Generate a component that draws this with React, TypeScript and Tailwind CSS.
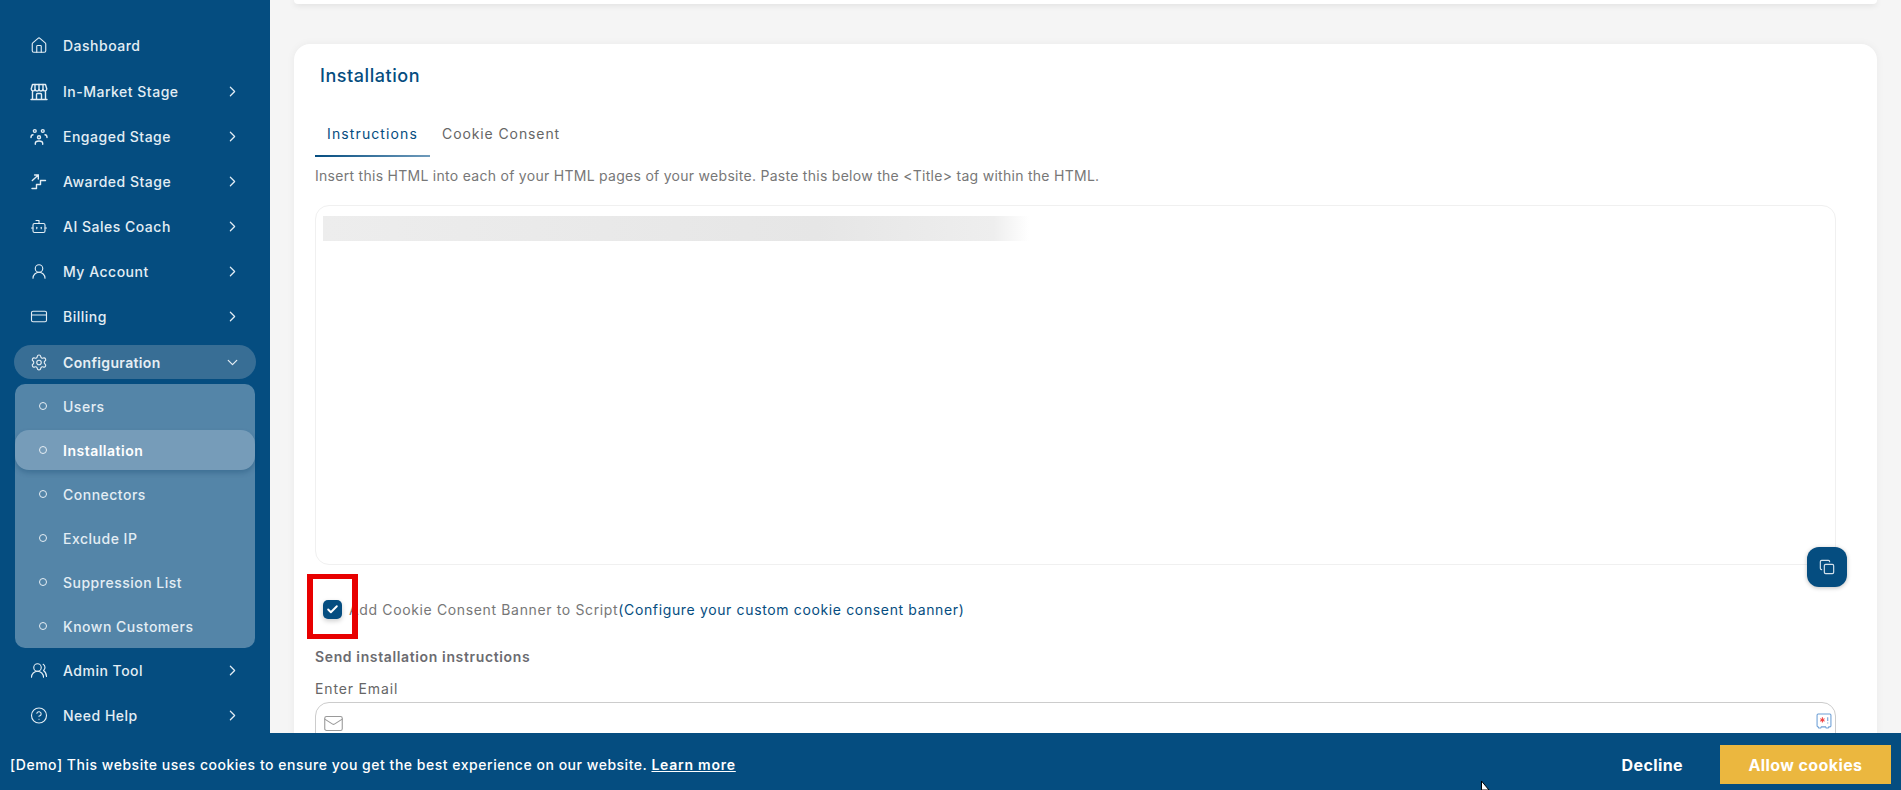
import { House, Bot, UserRound, CreditCard, Settings, UsersRound, CircleHelp, ChevronRight, ChevronDown, Copy, Mail, Check } from "lucide-react";

const font = { fontFamily: '"Inter", "Liberation Sans", sans-serif' };

function Storefront() {
  return (
    <svg width="18" height="18" viewBox="0 0 18 18" fill="none" stroke="currentColor" strokeWidth="1.4" strokeLinecap="round" strokeLinejoin="round">
      <path d="M2.5 1.5h13L16.8 6a2 2 0 0 1-3.9.5 2 2 0 0 1-3.9 0 2 2 0 0 1-3.9 0A2 2 0 0 1 1.2 6Z" />
      <path d="M5 1.5 5 6.5M9 1.5v5M13 1.5v5" />
      <path d="M2.5 8.5v7.5M15.5 8.5v7.5M1 16.5h16M6.5 16v-4.5a1 1 0 0 1 1-1h3a1 1 0 0 1 1 1V16" />
    </svg>
  );
}

function Engaged() {
  return (
    <svg width="18" height="18" viewBox="0 0 18 18" fill="none" stroke="currentColor" strokeWidth="1.4" strokeLinecap="round">
      <circle cx="4.8" cy="3" r="1.4" />
      <circle cx="12.8" cy="3" r="1.4" />
      <circle cx="9" cy="9.3" r="1.5" />
      <path d="M1 9.5c0-1.6 .8-2.5 2-2.7M17 9.5c0-1.6-.8-2.5-2-2.7M5.3 16.2v-.8c0-1.5 1.4-2.4 3.7-2.4s3.7.9 3.7 2.4v.8" />
    </svg>
  );
}

function Stairs() {
  return (
    <svg width="18" height="18" viewBox="0 0 18 18" fill="none" stroke="currentColor" strokeWidth="1.4" strokeLinecap="round" strokeLinejoin="round">
      <path d="M2 15.5h4.5v-4h4v-4h5" />
      <path d="M2.3 7.5 8.3 2M4.6 2h3.7v4" />
    </svg>
  );
}

function KeyBadge() {
  return (
    <svg width="16" height="16" viewBox="0 0 15 15" fill="none">
      <path d="M2 1h11a1 1 0 0 1 1 1v10a1 1 0 0 1-1 1h-1l-.5 1h-2l-.5-1H5l-.5 1h-2L2 13a1 1 0 0 1-1-1V2a1 1 0 0 1 1-1Z" stroke="#6d9fd6" strokeWidth="1" />
      <path d="M6 4v5M4 5.3l4 2.4M8 5.3 4 7.7" stroke="#ef4444" strokeWidth="1" />
      <path d="M11 4v3.5M11 9v.8" stroke="#6d9fd6" strokeWidth="1" />
    </svg>
  );
}

const top = [
  { label: "Dashboard", icon: <House size={19} strokeWidth={1.5} />, chevron: false, h: "h-[47px]" },
  { label: "In-Market Stage", icon: <Storefront />, chevron: true, h: "h-[45px]" },
  { label: "Engaged Stage", icon: <Engaged />, chevron: true, h: "h-[45px]" },
  { label: "Awarded Stage", icon: <Stairs />, chevron: true, h: "h-[45px]" },
  { label: "AI Sales Coach", icon: <Bot size={19} strokeWidth={1.5} />, chevron: true, h: "h-[45px]" },
  { label: "My Account", icon: <UserRound size={19} strokeWidth={1.5} />, chevron: true, h: "h-[45px]" },
  { label: "Billing", icon: <CreditCard size={19} strokeWidth={1.5} />, chevron: true, h: "h-[45px]" },
];

const sub = ["Users", "Installation", "Connectors", "Exclude IP", "Suppression List", "Known Customers"];

function NavRow({ label, icon, chevron, h }: { label: string; icon: React.ReactNode; chevron: boolean; h: string }) {
  return (
    <div className={`${h} flex items-center pl-[30px] pr-[29px] text-[#e3edf4]`}>
      <span className="flex w-[18px] shrink-0 justify-center">{icon}</span>
      <span className="ml-[15px] flex-1 text-[14px] font-medium tracking-[0.5px]">{label}</span>
      {chevron && <ChevronRight size={17} strokeWidth={1.75} />}
    </div>
  );
}

export default function App() {
  return (
    <div className="relative flex h-[790px] w-full overflow-hidden bg-[#f5f5f5]" style={font}>
      <aside className="w-[270px] shrink-0 bg-[#054d80] pt-[22px]">
        {top.map((t) => (
          <NavRow key={t.label} {...t} />
        ))}
        <div className="mx-[14px] mt-[6px] flex h-[34px] items-center rounded-[17px] bg-[#386e95] pl-[16px] pr-[15px] text-[#e6eef4]">
          <span className="flex w-[18px] justify-center"><Settings size={19} strokeWidth={1.5} /></span>
          <span className="ml-[15px] flex-1 text-[14px] font-semibold tracking-[0.35px]">Configuration</span>
          <ChevronDown size={17} strokeWidth={1.75} />
        </div>
        <div className="mx-[15px] mt-[7px] h-[264px] rounded-[10px] bg-[#5485a8]">
          <div className="-mt-[2px] flex flex-col">
            {sub.map((s) => {
              const active = s === "Installation";
              return (
                <div key={s} className="flex h-[44px] shrink-0 flex-col justify-center">
                  <div
                    className={`flex h-[40px] items-center pl-[24px] ${
                      active ? "rounded-[14px] bg-[#769cb9] text-white shadow-[0_3px_5px_rgba(0,50,90,0.25)]" : "text-[#e3edf4]"
                    }`}
                  >
                    <span className="h-[8px] w-[8px] rounded-full border-[1.5px] border-[#e6eef4]" />
                    <span className={`ml-[16px] text-[14px] tracking-[0.5px] ${active ? "font-semibold" : "font-medium"}`}>{s}</span>
                  </div>
                </div>
              );
            })}
          </div>
        </div>
        <NavRow label="Admin Tool" icon={<UsersRound size={19} strokeWidth={1.5} />} chevron h="h-[45px]" />
        <NavRow label="Need Help" icon={<CircleHelp size={19} strokeWidth={1.5} />} chevron h="h-[45px]" />
      </aside>

      <main className="flex-1 pl-[24px] pr-[24px]">
        <div className="h-[4px] rounded-b-[14px] bg-white shadow-[0_1px_6px_rgba(0,0,0,0.12)]" />
        <section className="mt-[40px] h-[760px] rounded-[16px] bg-white pl-[21px] pr-[41px] pt-[20px] shadow-[0_0_8px_rgba(0,0,0,0.05)]">
          <h2 className="ml-[5px] text-[18px] font-medium leading-[24px] tracking-[0.55px] text-[#054d80]">Installation</h2>
          <div className="mt-[26px] flex text-[14px]">
            <div className="flex h-[43px] w-[115px] items-start justify-center bg-[linear-gradient(90deg,#054d80,#6f9bbb)] bg-[length:100%_2px] bg-bottom bg-no-repeat pt-[9px] tracking-[1.1px] text-[#054d80]">
              Instructions
            </div>
            <div className="ml-[12px] pt-[9px] tracking-[0.9px] text-[#666]">Cookie Consent</div>
          </div>
          <p className="mt-[10px] text-[14px] leading-[18px] tracking-[0.28px] text-[#777]">
            Insert this HTML into each of your HTML pages of your website. Paste this below the &lt;Title&gt; tag within the HTML.
          </p>
          <div className="relative mt-[20px] h-[360px] rounded-[14px] border border-[#f0f0f0] pl-[7px] pt-[10px]">
            <div className="h-[25px] w-[706px] bg-[linear-gradient(90deg,#ededed_0%,#e6e6e6_70%,#eeeeee_95%,#ffffff_100%)]" />
            <button className="absolute right-[-12px] bottom-[-23px] flex h-[40px] w-[40px] items-center justify-center rounded-[12px] bg-[#054d80] text-[#d5e2ec] shadow-[0_1px_4px_rgba(0,0,0,0.25)]">
              <Copy size={16} strokeWidth={1.75} />
            </button>
          </div>
          <div className="relative mt-[34px] flex h-[20px] items-center pl-[8px] text-[14px] tracking-[0.64px]">
            <span className="flex h-[19px] w-[19px] items-center justify-center rounded-[5px] bg-[#054d80] text-white shadow-[0_2px_5px_rgba(0,0,0,0.2)]">
              <Check size={13} strokeWidth={3.5} />
            </span>
            <span className="ml-[7px] text-[#777]">Add Cookie Consent Banner to Script</span>
            <span className="text-[#054d80]">(Configure your custom cookie consent banner)</span>
            <span className="absolute left-[-8px] top-[-25px] h-[65px] w-[51px] border-x-[6px] border-y-[5px] border-[#e80000]" />
          </div>
          <div className="mt-[28px] text-[14px] font-semibold leading-[20px] tracking-[0.63px] text-[#6b6b70]">Send installation instructions</div>
          <div className="mt-[12px] text-[14px] leading-[20px] tracking-[0.85px] text-[#666]">Enter Email</div>
          <div className="mt-[3px] flex h-[48px] items-start justify-between rounded-[14px] border border-[#ccc] pl-[7px] pr-[3px] pt-[10px] text-[#9a9a9a]">
            <Mail size={21} strokeWidth={1.25} />
            <KeyBadge />
          </div>
        </section>
      </main>

      <div className="absolute inset-x-0 bottom-0 flex h-[57px] items-center bg-[#054d80] px-[10px] pt-[6px] text-white">
        <span className="flex-1 text-[14px] font-medium tracking-[0.52px]">
          [Demo] This website uses cookies to ensure you get the best experience on our website.{" "}
          <a className="font-semibold tracking-[0.75px] underline">Learn more</a>
        </span>
        <button className="mr-[37px] text-[16px] font-bold tracking-[0.4px]">Decline</button>
        <button className="h-[39px] w-[171px] bg-[#ebb73f] text-[16px] font-bold tracking-[0.4px]">Allow cookies</button>
      </div>

      <svg className="absolute left-[1481px] top-[781px]" width="10" height="9" viewBox="0 0 10 9">
        <path d="M.5 0v9h7.5Z" fill="#fff" stroke="#000" strokeWidth="1" />
      </svg>
    </div>
  );
}
